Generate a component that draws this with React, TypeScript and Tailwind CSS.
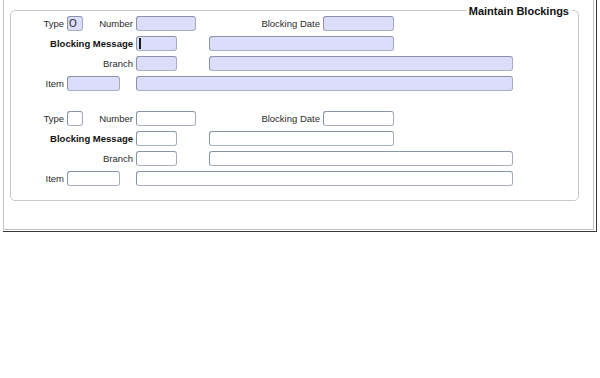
import React from "react";

const font = "font-['Liberation_Sans',Arial,sans-serif]";

function Label({ w, text, bold = false }: { w: string; text: string; bold?: boolean }) {
  return (
    <div
      className={`${w} shrink-0 pr-[3px] text-right text-[9.5px] leading-[11px] whitespace-nowrap ${
        bold ? "font-bold text-[#111]" : "text-[#2b2b2b]"
      }`}
    >
      {text}
    </div>
  );
}

function Box({
  w,
  filled,
  value,
  caret = false,
}: {
  w: string;
  filled: boolean;
  value?: string;
  caret?: boolean;
}) {
  return (
    <div
      className={`${w} h-[15px] shrink-0 flex items-center rounded-[3px] border border-[#8a94a9] border-b-[#a9b1c1] border-r-[#a3acbd] pl-[1px] text-[10px] leading-[11px] text-[#222] ${
        filled ? "bg-[#dcdcfb]" : "bg-white"
      }`}
    >
      {caret && <span className="ml-[1px] w-[2px] h-[11px] bg-[#1a1a1a]" />}
      {value}
    </div>
  );
}

function Group({ filled }: { filled: boolean }) {
  return (
    <div className="flex flex-col gap-[5px]">
      <div className="flex items-center">
        <Label w="w-[56px]" text="Type" />
        <Box w="w-[16px]" filled={filled} value={filled ? "O" : undefined} />
        <Label w="w-[53px]" text="Number" />
        <Box w="w-[60px]" filled={filled} />
        <Label w="w-[127px]" text="Blocking Date" />
        <Box w="w-[71px]" filled={filled} />
      </div>
      <div className="flex items-center">
        <Label w="w-[125px]" text="Blocking Message" bold />
        <Box w="w-[41px]" filled={filled} caret={filled} />
        <div className="w-[32px] shrink-0" />
        <Box w="w-[185px]" filled={filled} />
      </div>
      <div className="flex items-center">
        <Label w="w-[125px]" text="Branch" />
        <Box w="w-[41px]" filled={filled} />
        <div className="w-[32px] shrink-0" />
        <Box w="w-[304px]" filled={filled} />
      </div>
      <div className="flex items-center">
        <Label w="w-[56px]" text="Item" />
        <Box w="w-[53px]" filled={filled} />
        <div className="w-[16px] shrink-0" />
        <Box w="w-[377px]" filled={filled} />
      </div>
    </div>
  );
}

export default function App() {
  return (
    <div className={`w-[600px] h-[378px] bg-white ${font}`}>
      <div className="ml-[3px] w-[594px] border-r border-b border-[#3a3a3a] pr-[2px] pb-[1px]">
        <div className="h-[230px] border-l border-r border-b border-[#c4c4c4] pl-[6px] pt-[10px]">
          <div className="relative w-[569px] h-[191px] rounded-[5px] border border-[#c9c9c9] pt-[5px]">
            <span className="absolute right-[6px] top-[-6px] bg-white px-[3px] text-[11px] leading-[13px] font-bold text-[#111]">
              Maintain Blockings
            </span>
            <Group filled />
            <div className="h-[20px]" />
            <Group filled={false} />
          </div>
        </div>
      </div>
    </div>
  );
}
